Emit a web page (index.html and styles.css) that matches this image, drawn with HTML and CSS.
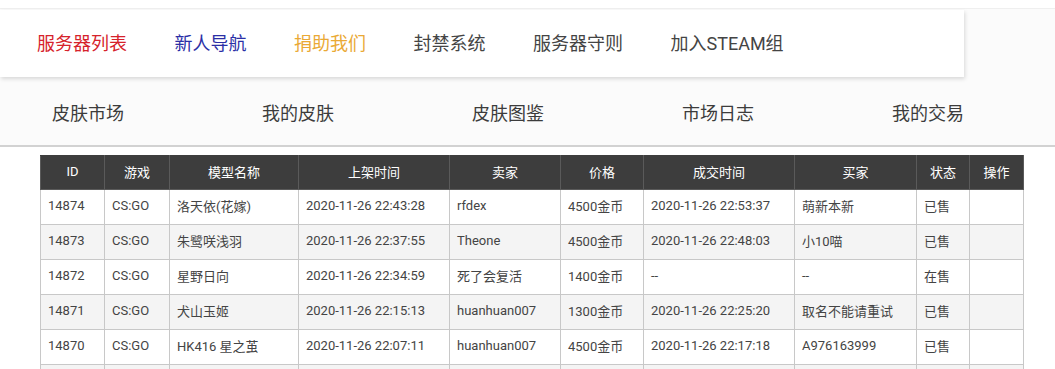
FILE: index.html
```html
<!DOCTYPE html>
<html>
<head>
  <meta charset="utf-8">
  <title>皮肤市场 - 我的交易</title>
  <link rel="stylesheet" href="styles.css">
</head>
<body>
  <div class="top-strip"></div>
  <div id="header">
    <nav class="main-nav">
      <a class="red">服务器列表</a>
      <a class="blue">新人导航</a>
      <a class="gold">捐助我们</a>
      <a>封禁系统</a>
      <a>服务器守则</a>
      <a>加入STEAM组</a>
    </nav>
    <nav class="sub-nav">
      <a>皮肤市场</a>
      <a>我的皮肤</a>
      <a>皮肤图鉴</a>
      <a>市场日志</a>
      <a>我的交易</a>
    </nav>
  </div>
  <table class="trades">
    <colgroup>
      <col style="width:64px"><col style="width:65px"><col style="width:129px">
      <col style="width:151px"><col style="width:111px"><col style="width:83px">
      <col style="width:151px"><col style="width:122px"><col style="width:53px">
      <col style="width:54px">
    </colgroup>
    <thead>
      <tr>
        <th>ID</th><th>游戏</th><th>模型名称</th><th>上架时间</th><th>卖家</th>
        <th>价格</th><th>成交时间</th><th>买家</th><th>状态</th><th>操作</th>
      </tr>
    </thead>
    <tbody>
      <tr>
        <td>14874</td><td>CS:GO</td><td>洛天依(花嫁)</td><td>2020-11-26 22:43:28</td><td>rfdex</td>
        <td>4500金币</td><td>2020-11-26 22:53:37</td><td>萌新本新</td><td>已售</td><td></td>
      </tr>
      <tr>
        <td>14873</td><td>CS:GO</td><td>朱鹭咲浅羽</td><td>2020-11-26 22:37:55</td><td>Theone</td>
        <td>4500金币</td><td>2020-11-26 22:48:03</td><td>小10喵</td><td>已售</td><td></td>
      </tr>
      <tr>
        <td>14872</td><td>CS:GO</td><td>星野日向</td><td>2020-11-26 22:34:59</td><td>死了会复活</td>
        <td>1400金币</td><td>--</td><td>--</td><td>在售</td><td></td>
      </tr>
      <tr>
        <td>14871</td><td>CS:GO</td><td>犬山玉姬</td><td>2020-11-26 22:15:13</td><td>huanhuan007</td>
        <td>1300金币</td><td>2020-11-26 22:25:20</td><td>取名不能请重试</td><td>已售</td><td></td>
      </tr>
      <tr>
        <td>14870</td><td>CS:GO</td><td>HK416 星之茧</td><td>2020-11-26 22:07:11</td><td>huanhuan007</td>
        <td>4500金币</td><td>2020-11-26 22:17:18</td><td>A976163999</td><td>已售</td><td></td>
      </tr>
      <tr>
        <td></td><td></td><td></td><td></td><td></td>
        <td></td><td></td><td></td><td></td><td></td>
      </tr>
    </tbody>
  </table>
</body>
</html>
```

FILE: styles.css
```css
:root {
  --font-family: Roboto, "Noto Sans CJK SC", sans-serif;
  --text: #444;
  --border: #c8c8c8;
}
html, body {
  margin: 0;
  padding: 0;
}
body {
  font-family: var(--font-family);
  background: #fff;
  color: var(--text);
  overflow: hidden;
}
a {
  cursor: pointer;
}
.top-strip {
  height: 8px;
  background: #fff;
  border-bottom: 1px solid #efefef;
}
#header {
  background: #fbfbfb;
  padding-top: 1px;
  border-bottom: 2px solid #d2d2d2;
}
.main-nav {
  display: flex;
  width: 951px;
  height: 67px;
  padding-left: 13px;
  background: #fff;
  box-shadow: 1px 2px 4px rgba(0, 0, 0, 0.14);
  position: relative;
}
.main-nav a {
  display: block;
  padding: 0 23.5px 0 24px;
  line-height: 67px;
  font-size: 18px;
  color: #444;
}
.main-nav a.red {
  color: #d6222b;
}
.main-nav a.blue {
  color: #2b2fa6;
}
.main-nav a.gold {
  color: #eaa935;
}
.sub-nav {
  display: grid;
  grid-template-columns: repeat(5, 210px);
  height: 68px;
  padding-left: 52px;
}
.sub-nav a {
  line-height: 73px;
  font-size: 18px;
  color: #3c3c3c;
}
.trades {
  margin: 8px 0 0 40px;
  width: 983px;
  table-layout: fixed;
  border-collapse: collapse;
  font-size: 13px;
}
.trades th {
  height: 30px;
  padding: 0 0 3px;
  background: #3d3d3d;
  color: #fff;
  font-weight: normal;
  text-align: center;
  border: 1px solid #5a5a5a;
  border-top-color: #3d3d3d;
}
.trades td {
  height: 30px;
  padding: 0 0 4px 7px;
  border: 1px solid var(--border);
  color: #444;
  white-space: nowrap;
  overflow: hidden;
}
.trades tbody tr:nth-child(even) td {
  background: #f4f4f4;
}
```
